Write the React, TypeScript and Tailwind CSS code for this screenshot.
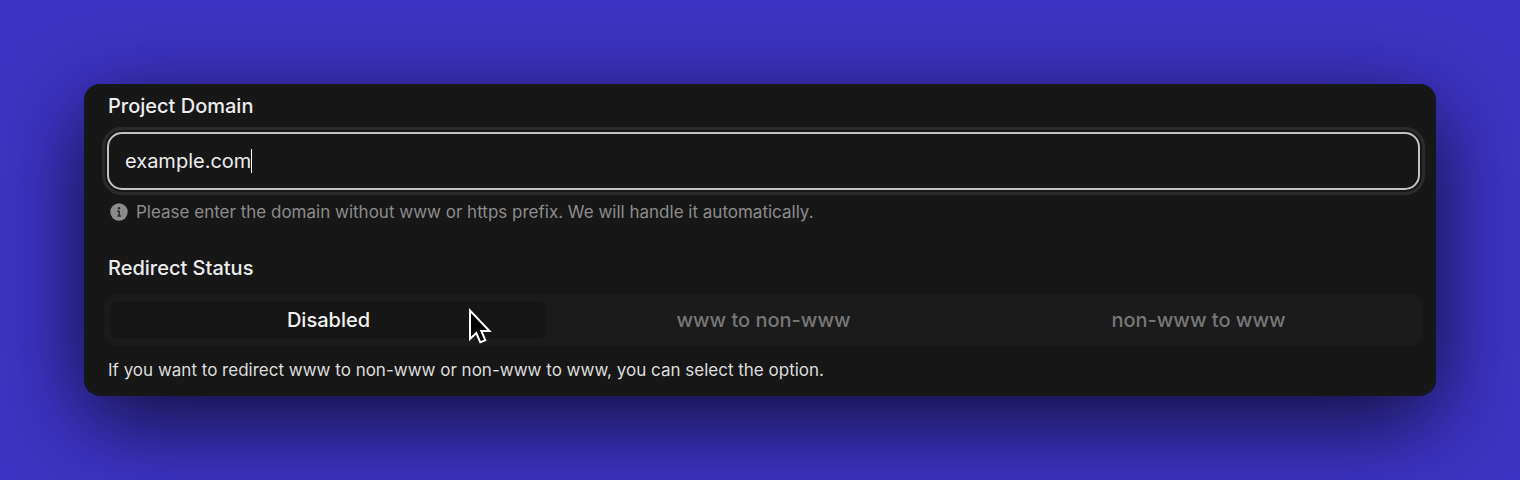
import React, { useState } from "react";

const options = ["Disabled", "www to non-www", "non-www to www"];

const InfoIcon = () => (
  <svg
    viewBox="0 0 18 18"
    className="size-[18px] shrink-0"
    aria-hidden="true"
  >
    <circle cx="9" cy="9" r="8.7" fill="#8c8c8c" />
    <circle cx="9" cy="5.3" r="1.2" fill="#2b2b2b" />
    <path
      d="M7.7 8.3h1.5v4.3M7.9 13h2.5"
      fill="none"
      stroke="#2b2b2b"
      strokeWidth="1.5"
      strokeLinecap="round"
      strokeLinejoin="round"
    />
  </svg>
);

const Pointer = () => (
  <svg
    viewBox="0 0 24 38"
    className="pointer-events-none absolute top-[14px] left-[364px] h-[38px] w-6"
    aria-hidden="true"
  >
    <path
      d="M2 2.5V31l6.3-6 4 9.3 5-2.1-4-9.2h8.2z"
      fill="#000"
      stroke="#fff"
      strokeWidth="2"
    />
  </svg>
);

const DomainField = () => {
  const [domain, setDomain] = useState("example.com");

  return (
    <div className="flex flex-col">
      <label htmlFor="domain" className="text-xl leading-7 font-medium">
        Project Domain
      </label>
      <div className="-mx-px mt-3 flex h-[58px] items-center rounded-[15px] border-2 border-[#c4c2c4] px-4 outline-3 outline-offset-2 outline-[#2b2b2b]">
        <input
          id="domain"
          type="text"
          value={domain}
          onChange={(e) => setDomain(e.target.value)}
          className="field-sizing-content bg-transparent text-xl leading-7 caret-transparent outline-none"
        />
        <span className="h-6 w-px bg-white" />
      </div>
      <p className="mt-2 flex items-center gap-2 px-0.5 text-[17px] leading-7 text-[#8c8c8c]">
        <InfoIcon />
        Please enter the domain without www or https prefix. We will handle it
        automatically.
      </p>
    </div>
  );
};

const RedirectStatus = () => {
  const [selected, setSelected] = useState("Disabled");

  return (
    <div className="mt-7 flex flex-col">
      <h2 id="redirect" className="text-xl leading-7 font-medium">
        Redirect Status
      </h2>
      <div
        role="group"
        aria-labelledby="redirect"
        className="relative -mx-1 mt-3 grid h-[52px] grid-cols-3 rounded-xl bg-[#1b1b1b] p-[7px]"
      >
        {options.map((option) => (
          <button
            key={option}
            type="button"
            aria-pressed={selected === option}
            onClick={() => setSelected(option)}
            className={
              selected === option
                ? "rounded-lg bg-[#161616] text-xl font-medium text-[#f2f2f2]"
                : "rounded-lg text-xl font-medium text-[#777777]"
            }
          >
            {option}
          </button>
        ))}
        <Pointer />
      </div>
      <p className="mt-3 text-[17px] leading-6 text-[#dedede]">
        If you want to redirect www to non-www or non-www to www, you can select
        the option.
      </p>
    </div>
  );
};

const App = () => {
  return (
    <main className="flex min-h-screen items-center bg-[#3d33c4] px-[84px] font-['Inter',sans-serif]">
      <form
        onSubmit={(e) => e.preventDefault()}
        className="w-full rounded-2xl bg-[#171717] pt-2 pr-[17px] pb-[14px] pl-6 text-[#ededed] shadow-[0_24px_90px_rgba(0,0,0,0.72)]"
      >
        <DomainField />
        <RedirectStatus />
      </form>
    </main>
  );
};

export default App;
